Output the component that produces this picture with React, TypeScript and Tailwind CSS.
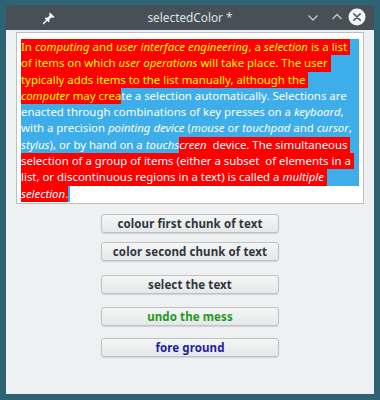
import React from "react";

type Seg = { t: string; i?: boolean; c: "r1" | "b" | "r2" };

const lines: Seg[][] = [
  [
    { t: "In ", c: "r1" },
    { t: "computing", i: true, c: "r1" },
    { t: " and ", c: "r1" },
    { t: "user interface engineering", i: true, c: "r1" },
    { t: ", a ", c: "r1" },
    { t: "selection", i: true, c: "r1" },
    { t: " is a list ", c: "r1" },
  ],
  [
    { t: "of items on which ", c: "r1" },
    { t: "user operations", i: true, c: "r1" },
    { t: " will take place. The user ", c: "r1" },
  ],
  [{ t: "typically adds items to the list manually, although the ", c: "r1" }],
  [
    { t: "computer", i: true, c: "r1" },
    { t: " may crea", c: "r1" },
    { t: "te a selection automatically. Selections are", c: "b" },
  ],
  [
    { t: "enacted through combinations of key presses on a ", c: "b" },
    { t: "keyboard", i: true, c: "b" },
    { t: ",", c: "b" },
  ],
  [
    { t: "with a precision ", c: "b" },
    { t: "pointing device", i: true, c: "b" },
    { t: " (", c: "b" },
    { t: "mouse", i: true, c: "b" },
    { t: " or ", c: "b" },
    { t: "touchpad", i: true, c: "b" },
    { t: " and ", c: "b" },
    { t: "cursor", i: true, c: "b" },
    { t: ",", c: "b" },
  ],
  [
    { t: "stylus", i: true, c: "b" },
    { t: "), or by hand on a ", c: "b" },
    { t: "touchs", i: true, c: "b" },
    { t: "creen", i: true, c: "r2" },
    { t: "  device. The simultaneous ", c: "r2" },
  ],
  [{ t: "selection of a group of items (either a subset  of elements in a ", c: "r2" }],
  [
    { t: "list, or discontinuous regions in a text) is called a ", c: "r2" },
    { t: "multiple", i: true, c: "r2" },
    { t: " ", c: "r2" },
  ],
  [
    { t: "selection", i: true, c: "r2" },
    { t: ".", c: "r2" },
  ],
];

const segClass = {
  r1: "bg-[#ff0000] text-[#ffff00]",
  b: "text-white",
  r2: "bg-[#ff0000] text-white",
};

function Line({ segs }: { segs: Seg[] }) {
  return (
    <>
      {segs.map((s, k) => (
        <span
          key={k}
          className={`inline-block h-[16.3px] ${segClass[s.c]} ${s.i ? "italic" : ""}`}
        >
          {s.t}
        </span>
      ))}
    </>
  );
}

function QtButton({ label, color, mt }: { label: string; color: string; mt: string }) {
  return (
    <button
      className={`${mt} ${color} w-[178px] h-[19px] rounded-[3px] border border-[#bfc2c5] bg-gradient-to-b from-[#f4f5f5] to-[#e6e7e8] shadow-[0_1px_1px_rgba(0,0,0,0.12)] text-[11.5px] font-bold leading-[17px] tracking-[0.1px]`}
    >
      {label}
    </button>
  );
}

export default function App() {
  return (
    <div
      className="w-[380px] h-[400px] bg-[#2e6373] pt-[5px] px-[6px]"
      style={{ fontFamily: '"Noto Sans", "DejaVu Sans", sans-serif' }}
    >
      <div className="w-[368px] h-[389px] flex flex-col rounded-t-[4px] overflow-hidden">
        {/* Title bar */}
        <div className="relative h-[25px] bg-[#475057] flex items-center justify-center">
          <svg className="absolute left-[36px] top-[6px]" width="14" height="14" viewBox="0 0 14 14">
            <path d="M8 1.5 L12.5 6 L11 7 L9.6 6.3 L7.2 8.7 L7.6 10.4 L6.6 11.2 L2.8 7.4 L3.6 6.4 L5.3 6.8 L7.7 4.4 L7 3 Z" fill="#fcfcfc" />
            <path d="M4.5 9.5 L1.5 12.5" stroke="#fcfcfc" strokeWidth="1.4" strokeLinecap="round" />
          </svg>
          <span className="text-[11.8px] text-[#dfe2e4]">selectedColor *</span>
          <svg className="absolute left-[301px] top-[8px]" width="12" height="10" viewBox="0 0 12 10">
            <path d="M1.5 2.5 L6 7 L10.5 2.5" stroke="#c4c8cb" strokeWidth="1.3" fill="none" />
          </svg>
          <svg className="absolute left-[325px] top-[7px]" width="12" height="10" viewBox="0 0 12 10">
            <path d="M1.5 7 L6 2.5 L10.5 7" stroke="#c4c8cb" strokeWidth="1.3" fill="none" />
          </svg>
          <svg className="absolute left-[342px] top-[3px]" width="18" height="18" viewBox="0 0 18 18">
            <circle cx="9" cy="9" r="8.5" fill="#f4f5f5" />
            <path d="M5.8 5.8 L12.2 12.2 M12.2 5.8 L5.8 12.2" stroke="#475057" strokeWidth="1.6" strokeLinecap="round" />
          </svg>
        </div>

        {/* Body */}
        <div className="flex-1 bg-[#eff0f1] flex flex-col items-center px-[10px] pt-[2px]">
          <div className="w-full h-[172px] border border-[#bcc0c3] bg-white px-[4px] pt-[6px] text-[11.4px] leading-[16.3px]">
            {lines.map((segs, idx) =>
              idx < lines.length - 1 ? (
                <div key={idx} className="h-[16.3px] whitespace-pre bg-[#3daee9] overflow-hidden">
                  <Line segs={segs} />
                </div>
              ) : (
                <div key={idx} className="h-[16.3px] whitespace-pre">
                  <span className="inline-block h-[16.3px] bg-[#3daee9] pr-[2px]">
                    <Line segs={segs} />
                  </span>
                </div>
              )
            )}
          </div>

          <QtButton label="colour first chunk of text" color="text-[#31363b]" mt="mt-[10px]" />
          <QtButton label="color second chunk of text" color="text-[#31363b]" mt="mt-[9px]" />
          <QtButton label="select the text" color="text-[#31363b]" mt="mt-[14px]" />
          <QtButton label="undo the mess" color="text-[#1f9a1f]" mt="mt-[13px]" />
          <QtButton label="fore ground" color="text-[#1e1e9c]" mt="mt-[12px]" />
        </div>
      </div>
    </div>
  );
}
